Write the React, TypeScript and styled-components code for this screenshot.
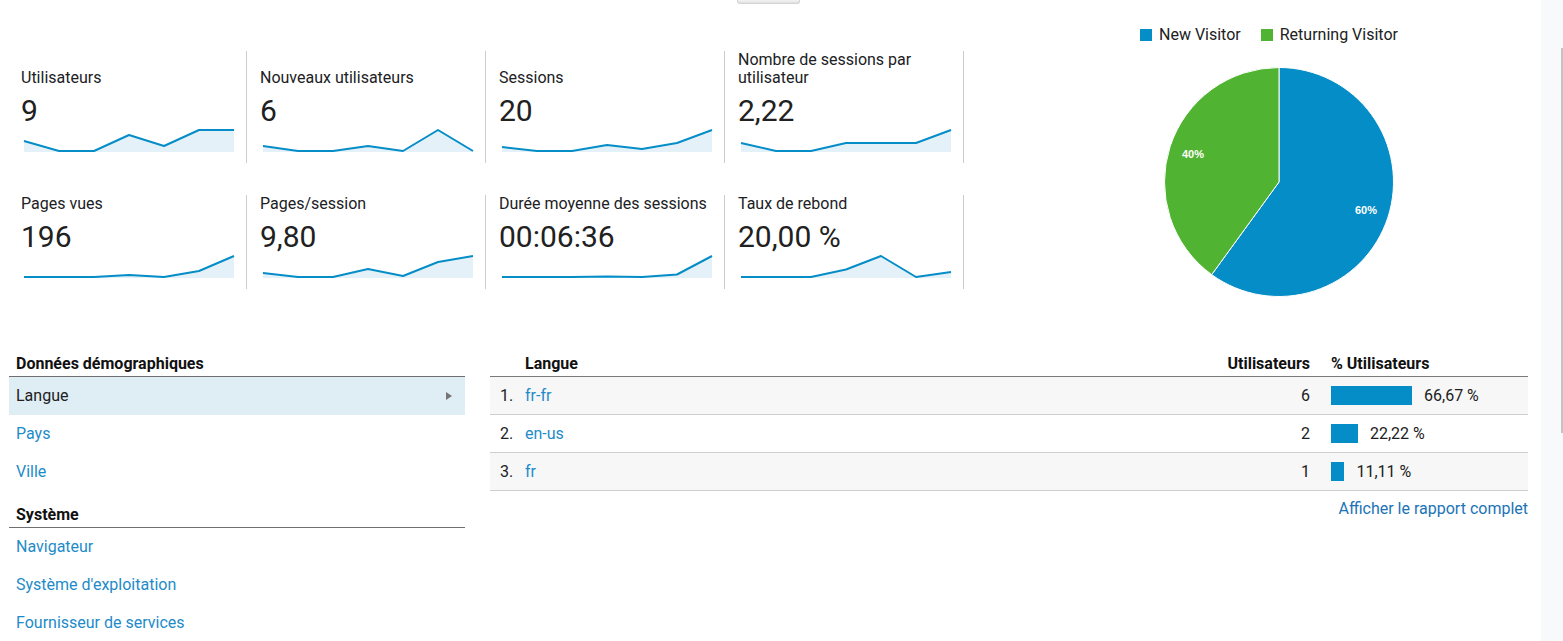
import React from 'react';
import styled, { createGlobalStyle } from 'styled-components';

const GlobalStyle = createGlobalStyle`
  * {
    box-sizing: border-box;
  }
  html, body {
    margin: 0;
    padding: 0;
    background: #fff;
    font-family: Roboto, "Liberation Sans", Arial, sans-serif;
    color: #212121;
  }
  #root {
    height: 100vh;
    overflow: hidden;
  }
`;

interface Metric {
  label: string;
  value: string;
  points: number[];
}

const metricRows: Metric[][] = [
  [
    { label: 'Utilisateurs', value: '9', points: [11, 21, 21, 5, 16, 0, 0] },
    { label: 'Nouveaux utilisateurs', value: '6', points: [16, 21, 21, 16, 21, 0, 21] },
    { label: 'Sessions', value: '20', points: [17, 21, 21, 15, 19, 13, 0] },
    { label: 'Nombre de sessions par utilisateur', value: '2,22', points: [13, 21, 21, 13, 13, 13, 0] },
  ],
  [
    { label: 'Pages vues', value: '196', points: [21, 21, 21, 19, 21, 15, 0] },
    { label: 'Pages/session', value: '9,80', points: [17, 21, 21, 13, 20, 6, 0] },
    { label: 'Durée moyenne des sessions', value: '00:06:36', points: [21, 21, 21, 20.5, 21, 18.5, 0] },
    { label: 'Taux de rebond', value: '20,00 %', points: [21, 21, 21, 13.5, 0, 21, 16] },
  ],
];

const languages = [
  { name: 'fr-fr', users: 6, pct: 66.67 },
  { name: 'en-us', users: 2, pct: 22.22 },
  { name: 'fr', users: 1, pct: 11.11 },
];

const navGroups = [
  { title: 'Données démographiques', items: ['Langue', 'Pays', 'Ville'] },
  { title: 'Système', items: ['Navigateur', "Système d'exploitation", 'Fournisseur de services'] },
];

const formatPct = (n: number) => n.toFixed(2).replace('.', ',') + ' %';

const Sparkline: React.FC<{ points: number[] }> = ({ points }) => {
  const coords = points.map((p, i) => `${1 + i * 35},${1 + p}`);
  const line = 'M' + coords.join(' L');
  const area = `${line} L${1 + (points.length - 1) * 35},23 L1,23 Z`;
  return (
    <SparkSvg width="212" height="23" viewBox="0 0 212 23">
      <path d={area} fill="#e5f1f8" />
      <path d={line} fill="none" stroke="#058dc7" strokeWidth="2" strokeLinejoin="round" />
    </SparkSvg>
  );
};

const PieChart: React.FC = () => {
  const cx = 115;
  const cy = 115;
  const r = 114.5;
  const angle = 0.6 * 2 * Math.PI;
  const ex = cx + r * Math.sin(angle);
  const ey = cy - r * Math.cos(angle);
  return (
    <PieSvg width="230" height="230" viewBox="0 0 230 230">
      <path
        d={`M${cx},${cy} L${cx},${cy - r} A${r},${r} 0 1 1 ${ex},${ey} Z`}
        fill="#058dc7"
        stroke="#fff"
        strokeWidth="1"
      />
      <path
        d={`M${cx},${cy} L${ex},${ey} A${r},${r} 0 0 1 ${cx},${cy - r} Z`}
        fill="#50b432"
        stroke="#fff"
        strokeWidth="1"
      />
      <PieLabel x="202" y="147">60%</PieLabel>
      <PieLabel x="29" y="91">40%</PieLabel>
    </PieSvg>
  );
};

const App: React.FC = () => {
  return (
    <Page>
      <GlobalStyle />
      <Main>
        <TopBar>
          <TabHandle />
        </TopBar>
        <Overview>
          <MetricGrid>
            {metricRows.map((row, ri) => (
              <MetricRow key={ri}>
                {row.map((m) => (
                  <MetricCard key={m.label}>
                    <MetricLabel>
                      <span>{m.label}</span>
                    </MetricLabel>
                    <MetricValue>{m.value}</MetricValue>
                    <Sparkline points={m.points} />
                  </MetricCard>
                ))}
              </MetricRow>
            ))}
          </MetricGrid>
          <ChartPanel>
            <Legend>
              <LegendItem>
                <Swatch color="#058dc7" />
                New Visitor
              </LegendItem>
              <LegendItem>
                <Swatch color="#50b432" />
                Returning Visitor
              </LegendItem>
            </Legend>
            <PieChart />
          </ChartPanel>
        </Overview>

        <Breakdown>
          <DimensionNav>
            {navGroups.map((g) => (
              <div key={g.title}>
                <NavHeading>{g.title}</NavHeading>
                {g.items.map((item) => (
                  <NavItem key={item} $active={item === 'Langue'}>
                    {item}
                    {item === 'Langue' && (
                      <svg width="6" height="8" viewBox="0 0 6 8">
                        <polygon points="0,0 6,4 0,8" fill="#757575" />
                      </svg>
                    )}
                  </NavItem>
                ))}
              </div>
            ))}
          </DimensionNav>

          <ReportTable>
            <HeaderRow>
              <span />
              <span>Langue</span>
              <NumCell>Utilisateurs</NumCell>
              <PctCell>% Utilisateurs</PctCell>
            </HeaderRow>
            {languages.map((l, i) => (
              <DataRow key={l.name} $striped={i % 2 === 0}>
                <IndexCell>{i + 1}.</IndexCell>
                <RowLink>{l.name}</RowLink>
                <NumCell>{l.users}</NumCell>
                <PctCell>
                  <Bar style={{ width: `${l.pct * 1.215}px` }} />
                  {formatPct(l.pct)}
                </PctCell>
              </DataRow>
            ))}
            <FullReport>Afficher le rapport complet</FullReport>
          </ReportTable>
        </Breakdown>
      </Main>
      <ScrollGutter>
        <ScrollThumb />
      </ScrollGutter>
    </Page>
  );
};

const Page = styled.div`
  display: flex;
  height: 100%;
`;

const Main = styled.main`
  flex: 1;
  padding: 0 13px 0 8px;
  font-size: 16px;
`;

const TopBar = styled.div`
  height: 4px;
  display: flex;
  justify-content: center;
  overflow: hidden;
`;

const TabHandle = styled.div`
  width: 63px;
  height: 4px;
  background: linear-gradient(#f3f3f3, #e1e1e1);
  border: 1px solid #d3d3d3;
  border-top: none;
  border-radius: 0 0 3px 3px;
`;

const Overview = styled.section`
  display: flex;
  align-items: flex-start;
  margin-top: 21px;
`;

const MetricGrid = styled.div`
  display: flex;
  flex-direction: column;
  gap: 32px;
  margin-top: 26px;
`;

const MetricRow = styled.div`
  display: flex;
  align-items: stretch;
`;

const MetricCard = styled.div`
  width: 239px;
  display: flex;
  flex-direction: column;
  padding: 0 13px 11px;
  border-right: 1px solid #cccccc;
`;

const MetricLabel = styled.div`
  flex: 1;
  display: flex;
  align-items: flex-end;
  font-size: 16px;
  line-height: 18px;
  color: #202124;
`;

const MetricValue = styled.div`
  margin-top: 7px;
  font-size: 30px;
  line-height: 34px;
  color: #212121;
`;

const SparkSvg = styled.svg`
  display: block;
  margin: 1px 0 0 2px;
`;

const ChartPanel = styled.div`
  flex: 1;
  display: flex;
  flex-direction: column;
`;

const Legend = styled.div`
  display: flex;
  gap: 20px;
  margin-left: 176px;
  line-height: 20px;
  font-size: 16px;
  color: #212121;
`;

const LegendItem = styled.div`
  display: flex;
  align-items: center;
  gap: 7px;
`;

const Swatch = styled.span<{ color: string }>`
  width: 12px;
  height: 12px;
  background: ${(p) => p.color};
`;

const PieSvg = styled.svg`
  display: block;
  margin: 22px 0 0 200px;
`;

const PieLabel = styled.text`
  fill: #fff;
  font-family: "Liberation Sans", Arial, sans-serif;
  font-size: 11px;
  font-weight: 700;
  text-anchor: middle;
`;

const Breakdown = styled.section`
  display: flex;
  gap: 25px;
  margin-top: 43px;
  padding-left: 1px;
`;

const DimensionNav = styled.nav`
  width: 456px;
  flex-shrink: 0;
`;

const NavHeading = styled.div`
  height: 37px;
  display: flex;
  align-items: flex-end;
  padding: 0 7px 3px;
  border-bottom: 1px solid #6f6f6f;
  font-weight: 700;
  line-height: 18px;
  color: #111;
`;

const NavItem = styled.div<{ $active?: boolean }>`
  height: 38px;
  display: flex;
  align-items: center;
  justify-content: space-between;
  padding: 0 13px 0 7px;
  line-height: 18px;
  background: ${(p) => (p.$active ? '#dfedf5' : 'transparent')};
  color: ${(p) => (p.$active ? '#212121' : '#1e8bc9')};
  cursor: pointer;
`;

const ReportTable = styled.div`
  flex: 1;
  display: flex;
  flex-direction: column;
`;

const rowColumns = `
  display: grid;
  grid-template-columns: 35px 1fr 100px 218px;
  line-height: 18px;
`;

const HeaderRow = styled.div`
  ${rowColumns};
  height: 37px;
  align-items: end;
  padding-bottom: 3px;
  border-bottom: 1px solid #7a7a7a;
  font-weight: 700;
  color: #111;
`;

const DataRow = styled.div<{ $striped?: boolean }>`
  ${rowColumns};
  height: 38px;
  align-items: center;
  border-bottom: 1px solid #cfcfcf;
  background: ${(p) => (p.$striped ? '#f7f7f7' : '#fff')};
`;

const IndexCell = styled.span`
  padding-left: 10px;
  color: #212121;
`;

const RowLink = styled.span`
  color: #1e8bc9;
  cursor: pointer;
`;

const NumCell = styled.span`
  text-align: right;
`;

const PctCell = styled.span`
  display: flex;
  align-items: center;
  padding-left: 21px;
`;

const Bar = styled.span`
  height: 19px;
  margin-right: 12px;
  background: #058dc7;
`;

const FullReport = styled.a`
  align-self: flex-end;
  margin-top: 9px;
  line-height: 18px;
  color: #2173b6;
  cursor: pointer;
`;

const ScrollGutter = styled.aside`
  width: 22px;
  background: #f8f9fa;
  display: flex;
  justify-content: flex-end;
  padding: 48px 0 0;
`;

const ScrollThumb = styled.div`
  width: 2px;
  height: 385px;
  background: #c4c4c4;
`;

export default App;
